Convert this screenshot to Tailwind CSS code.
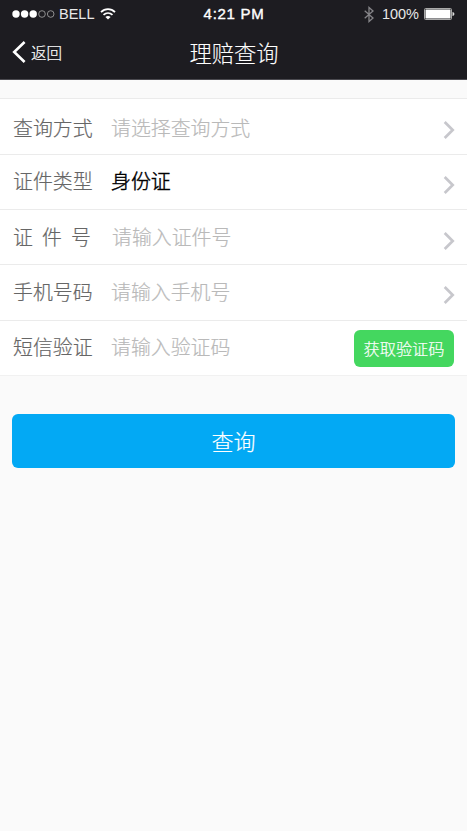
<!DOCTYPE html>
<html lang="zh-CN">
<head>
<meta charset="utf-8">
<title>理赔查询</title>
<script src="https://cdn.jsdelivr.net/npm/@tailwindcss/browser@4"></script>
</head>
<body class="min-h-screen bg-[#fafafa] font-['Noto_Sans_CJK_SC',sans-serif] font-light">
<header class="h-20 border-b border-[#4b4a50] bg-[#1d1c21] text-white">
  <div class="grid h-7 grid-cols-3 items-center pl-3 pr-[12px] font-['Liberation_Sans',sans-serif] text-[14.5px] font-normal leading-7">
    <div class="flex items-center">
      <svg class="h-2 w-[43px] shrink-0" viewBox="0 0 43 8"><g fill="#fff"><circle cx="4" cy="4" r="3.7"/><circle cx="12.6" cy="4" r="3.7"/><circle cx="21.2" cy="4" r="3.7"/></g><g fill="none" stroke="#aaa" stroke-width=".8"><circle cx="30" cy="4" r="3.3"/><circle cx="38.7" cy="4" r="3.3"/></g></svg>
      <span class="ml-1 w-9 text-[#e8e8e8]">BELL</span>
      <svg class="ml-[5px] h-3 w-4 shrink-0" viewBox="0 0 16 12" fill="none" stroke="#fff" stroke-width="1.8"><path d="M1 4.2C5 .2 11 .2 15 4.2M3.5 6.9c2.6-2.5 6.4-2.5 9 0"/><path d="M8 11.5 5.4 9c1.5-1.3 3.7-1.3 5.2 0z" fill="#fff" stroke="none"/></svg>
    </div>
    <div class="pl-[1px] text-center text-[15px] tracking-[.7px] [-webkit-text-stroke:.4px_white]">4:21 PM</div>
    <div class="flex items-center justify-end">
      <svg class="h-[17px] w-[10px]" viewBox="0 0 10 16" fill="none" stroke="#858488" stroke-width="1.3"><path d="M.7 4.2 9 11.6 5 15V1l4 3.4L.7 11.8"/></svg>
      <span class="ml-2 text-[#e8e8e8]">100%</span>
      <svg class="ml-[5px] h-3 w-[31px]" viewBox="0 0 31 12"><rect x=".5" y=".5" width="27" height="11" rx="1" fill="none" stroke="#aaa"/><rect x="1.5" y="1.5" width="25" height="9" fill="#fff"/><path d="M28.5 4c2.5.4 2.5 3.6 0 4z" fill="#ddd"/></svg>
    </div>
  </div>
  <div class="grid h-12 grid-cols-3 items-center px-3">
    <a class="flex items-center">
      <svg class="h-[22px] w-[14px]" viewBox="0 0 14 22" fill="none" stroke="#fff" stroke-width="2.6"><path d="M12.6 1 2.2 11l10.4 10"/></svg>
      <span class="ml-[5px] text-[15.5px] leading-6 [-webkit-text-stroke:.2px]">返回</span>
    </a>
    <h1 class="pl-px text-center text-[22.3px] leading-8 [-webkit-text-stroke:.1px]">理赔查询</h1>
  </div>
</header>

<main class="pt-[18px]">
  <form class="border-t border-[#ebebeb] bg-white text-[19.9px] leading-[30px] text-[#666] [-webkit-text-stroke:.2px]">
    <div class="flex h-14 items-start border-b border-[#ebebeb] pl-[13px] pr-3 pt-[14px]">
      <label class="w-[98px]">查询方式</label><span class="flex-1 text-[#b9b9b9]">请选择查询方式</span>
      <svg class="mt-[7.5px] h-[18px] w-3" viewBox="0 0 12 18" fill="none" stroke="#c7c7cc" stroke-width="2.7"><path d="m1.7 1 8 8-8 8"/></svg>
    </div>
    <div class="flex h-[55px] items-start border-b border-[#ebebeb] pl-[13px] pr-3 pt-[11px]">
      <label class="w-[98px]">证件类型</label><span class="flex-1 text-black [-webkit-text-stroke:.45px]">身份证</span>
      <svg class="mt-[9.5px] h-[18px] w-3" viewBox="0 0 12 18" fill="none" stroke="#c7c7cc" stroke-width="2.7"><path d="m1.7 1 8 8-8 8"/></svg>
    </div>
    <div class="flex h-[55px] items-start border-b border-[#ebebeb] pl-[13px] pr-3 pt-3">
      <label class="mr-[21px] flex w-[78px] justify-between"><span>证</span><span>件</span><span>号</span></label><span class="flex-1 text-[#b9b9b9]">请输入证件号</span>
      <svg class="mt-[9.5px] h-[18px] w-3" viewBox="0 0 12 18" fill="none" stroke="#c7c7cc" stroke-width="2.7"><path d="m1.7 1 8 8-8 8"/></svg>
    </div>
    <div class="flex h-14 items-start border-b border-[#ebebeb] pl-[13px] pr-3 pt-3">
      <label class="w-[98px]">手机号码</label><span class="flex-1 text-[#b9b9b9]">请输入手机号</span>
      <svg class="mt-[9px] h-[18px] w-3" viewBox="0 0 12 18" fill="none" stroke="#c7c7cc" stroke-width="2.7"><path d="m1.7 1 8 8-8 8"/></svg>
    </div>
    <div class="flex h-[55px] items-start border-b border-[#f1f1f1] pl-[13px] pr-[13px] pt-[9px]">
      <label class="mt-0.5 w-[98px]">短信验证</label><span class="mt-0.5 flex-1 text-[#b9b9b9]">请输入验证码</span>
      <button type="button" class="h-[37px] w-[100px] rounded-md bg-[#44d75f] text-[16.2px] leading-[37px] text-white">获取验证码</button>
    </div>
  </form>
  <div class="px-3 pt-[38px]">
    <button class="h-[54px] w-full rounded-md bg-[#03a9f4] pb-px text-[22px] leading-[53px] text-white [-webkit-text-stroke:.2px]">查询</button>
  </div>
</main>
</body>
</html>
